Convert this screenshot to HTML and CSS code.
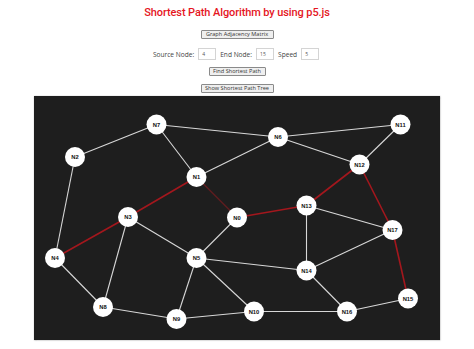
FILE: index.html
```html
<!DOCTYPE html>
<html>
<head>
<meta charset="utf-8">
<link rel="stylesheet" href="styles.css">
</head>
<body>
<main class="page">
  <h1 class="title">Shortest Path Algorithm by using p5.js</h1>
  <button class="btn btn-wide">Graph Adjacency Matrix</button>
  <div class="controls">
    <label class="lbl">Source Node:</label><input class="field" value="4">
    <label class="lbl">End Node:</label><input class="field" value="15">
    <label class="lbl">Speed</label><input class="field" value="5">
  </div>
  <button class="btn btn-find">Find Shortest Path</button>
  <button class="btn btn-wide btn-tree">Show Shortest Path Tree</button>
  <div class="canvas">
    <svg class="graph" viewBox="34 95 406 244" width="406" height="244">
      <g class="edges">
        <line x1="156.5" y1="123.5" x2="75" y2="156"/>
        <line x1="156.5" y1="123.5" x2="278" y2="136"/>
        <line x1="156.5" y1="123.5" x2="196.5" y2="176"/>
        <line x1="196.5" y1="176" x2="278" y2="136"/>
        <line x1="278" y1="136" x2="400.5" y2="123.5"/>
        <line x1="278" y1="136" x2="359.5" y2="163.5"/>
        <line x1="400.5" y1="123.5" x2="359.5" y2="163.5"/>
        <line x1="75" y1="156" x2="55" y2="257"/>
        <line x1="128" y1="216" x2="196.5" y2="257"/>
        <line x1="128" y1="216" x2="103" y2="306"/>
        <line x1="55" y1="257" x2="103" y2="306"/>
        <line x1="237" y1="216.5" x2="196.5" y2="257"/>
        <line x1="196.5" y1="257" x2="176.5" y2="318"/>
        <line x1="196.5" y1="257" x2="306.5" y2="269.5"/>
        <line x1="196.5" y1="257" x2="254" y2="310.5"/>
        <line x1="103" y1="306" x2="176.5" y2="318"/>
        <line x1="176.5" y1="318" x2="254" y2="310.5"/>
        <line x1="254" y1="310.5" x2="347" y2="310.5"/>
        <line x1="306.5" y1="204.5" x2="306.5" y2="269.5"/>
        <line x1="306.5" y1="204.5" x2="392.5" y2="229"/>
        <line x1="306.5" y1="269.5" x2="392.5" y2="229"/>
        <line x1="306.5" y1="269.5" x2="347" y2="310.5"/>
        <line x1="347" y1="310.5" x2="408" y2="297.5"/>
      </g>
      <g class="path-dim">
        <line x1="196.5" y1="176" x2="237" y2="216.5"/>
      </g>
      <g class="path">
        <line x1="196.5" y1="176" x2="128" y2="216"/>
        <line x1="128" y1="216" x2="55" y2="257"/>
        <line x1="237" y1="216.5" x2="306.5" y2="204.5"/>
        <line x1="306.5" y1="204.5" x2="359.5" y2="163.5"/>
        <line x1="359.5" y1="163.5" x2="392.5" y2="229"/>
        <line x1="392.5" y1="229" x2="408" y2="297.5"/>
      </g>
      <g class="nodes">
        <circle cx="237" cy="216.5" r="10"/><text x="237" y="216.5">N0</text>
        <circle cx="196.5" cy="176" r="10"/><text x="196.5" y="176">N1</text>
        <circle cx="75" cy="156" r="10"/><text x="75" y="156">N2</text>
        <circle cx="128" cy="216" r="10"/><text x="128" y="216">N3</text>
        <circle cx="55" cy="257" r="10"/><text x="55" y="257">N4</text>
        <circle cx="196.5" cy="257" r="10"/><text x="196.5" y="257">N5</text>
        <circle cx="278" cy="136" r="10"/><text x="278" y="136">N6</text>
        <circle cx="156.5" cy="123.5" r="10"/><text x="156.5" y="123.5">N7</text>
        <circle cx="103" cy="306" r="10"/><text x="103" y="306">N8</text>
        <circle cx="176.5" cy="318" r="10"/><text x="176.5" y="318">N9</text>
        <circle cx="254" cy="310.5" r="10"/><text x="254" y="310.5">N10</text>
        <circle cx="400.5" cy="123.5" r="10"/><text x="400.5" y="123.5">N11</text>
        <circle cx="359.5" cy="163.5" r="10"/><text x="359.5" y="163.5">N12</text>
        <circle cx="306.5" cy="204.5" r="10"/><text x="306.5" y="204.5">N13</text>
        <circle cx="306.5" cy="269.5" r="10"/><text x="306.5" y="269.5">N14</text>
        <circle cx="408" cy="297.5" r="10"/><text x="408" y="297.5">N15</text>
        <circle cx="347" cy="310.5" r="10"/><text x="347" y="310.5">N16</text>
        <circle cx="392.5" cy="229" r="10"/><text x="392.5" y="229">N17</text>
      </g>
    </svg>
  </div>
</main>
</body>
</html>
```

FILE: styles.css
```css
html, body {
  margin: 0;
  padding: 0;
  background: #ffffff;
}
body {
  font-family: "Open Sans", "Liberation Sans", sans-serif;
  width: 474px;
  height: 349px;
  overflow: hidden;
}
.page {
  display: flex;
  flex-direction: column;
  align-items: center;
}
.title {
  margin: 4px 0 0 0;
  font-family: Roboto, "Open Sans", sans-serif;
  font-size: 11px;
  line-height: 17px;
  font-weight: 500;
  color: #e5161e;
  letter-spacing: -0.1px;
}
.btn {
  font-family: "Open Sans", "Liberation Sans", sans-serif;
  font-size: 5.6px;
  line-height: 7px;
  height: 9px;
  padding: 0;
  box-sizing: border-box;
  border: 1px solid #8a8a8a;
  border-radius: 1px;
  background: #efefef;
  color: #333;
  display: flex;
  align-items: center;
  justify-content: center;
}
.btn-wide {
  width: 73px;
  margin-top: 8.5px;
}
.controls {
  margin-top: 9.5px;
  display: flex;
  align-items: center;
  height: 12px;
  font-size: 6.6px;
  color: #444;
  margin-left: 2px;
}
.lbl {
  margin-right: 4px;
}
.field {
  width: 18px;
  height: 12px;
  box-sizing: border-box;
  border: 1px solid #d4d4d4;
  padding: 0 0 0 3px;
  font-family: "Open Sans", "Liberation Sans", sans-serif;
  font-size: 5px;
  color: #555;
  margin-right: 4px;
  outline: none;
}
.btn-find {
  width: 57px;
  margin-top: 6.5px;
}
.btn-tree {
  margin-top: 8px;
}
.canvas {
  margin-top: 3.5px;
  width: 406px;
  height: 244px;
  background: #1e1e1e;
  box-shadow: 0 0 1.5px 0.5px #9a9a9a;
}
.graph {
  display: block;
}
.edges line {
  stroke: #d8d8d8;
  stroke-width: 1.1;
}
.path-dim line {
  stroke: #5e1c1e;
  stroke-width: 1.4;
}
.path line {
  stroke: #a3171d;
  stroke-width: 1.6;
}
.nodes circle {
  fill: #ffffff;
}
.nodes text {
  font-family: "Liberation Sans", Arial, sans-serif;
  font-weight: bold;
  font-size: 5.8px;
  fill: #111;
  text-anchor: middle;
  dominant-baseline: central;
}
```
